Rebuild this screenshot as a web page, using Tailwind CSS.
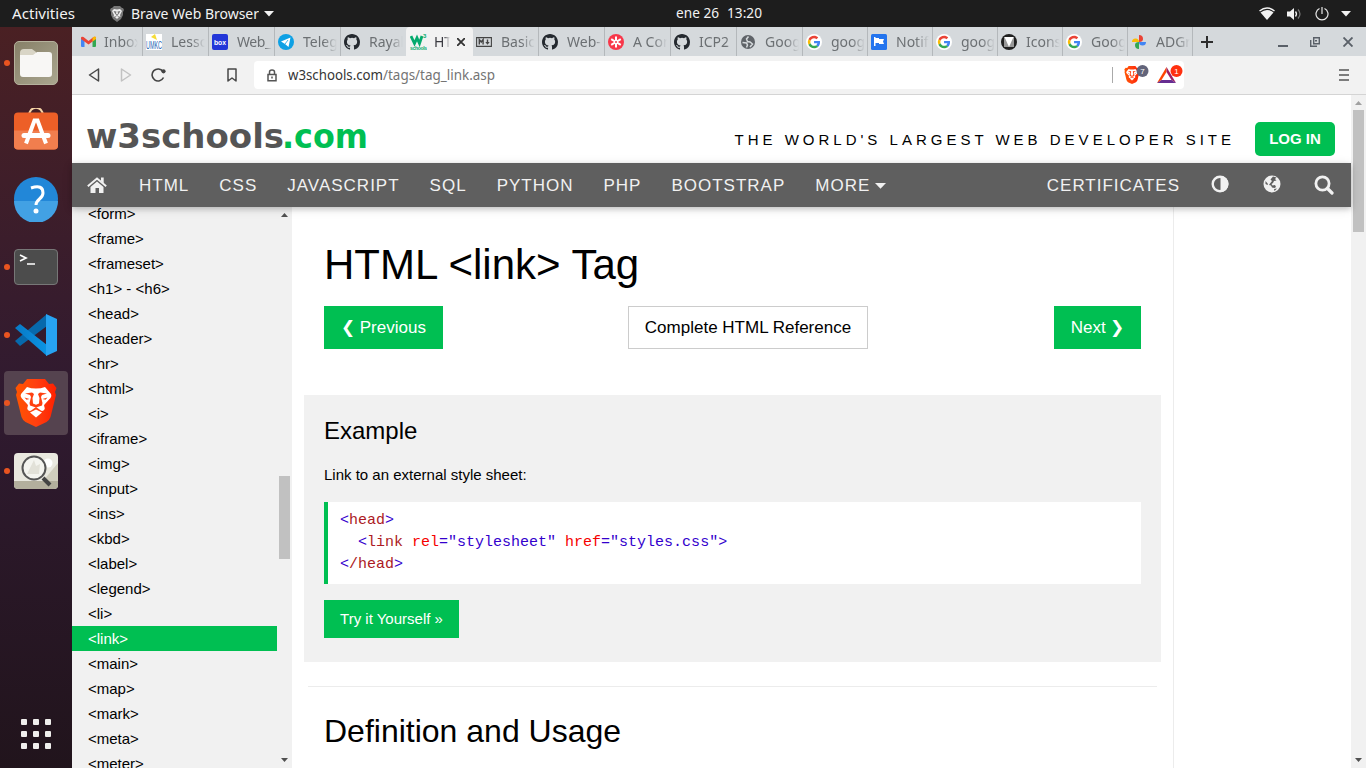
<!DOCTYPE html>
<html lang="en">
<head>
<meta charset="utf-8">
<title>HTML link Tag</title>
<script src="https://cdn.jsdelivr.net/npm/@tailwindcss/browser@4"></script>
</head>
<body class="w-[1366px] h-[768px] overflow-hidden flex flex-col bg-white font-['Liberation_Sans',sans-serif] text-black">
<svg class="absolute w-0 h-0">
  <defs>
    <symbol id="github" viewBox="0 0 16 16"><path fill="#24292f" d="M8 0C3.58 0 0 3.58 0 8c0 3.54 2.29 6.53 5.47 7.59.4.07.55-.17.55-.38v-1.49c-2.01.37-2.53-.49-2.69-.94-.09-.23-.48-.94-.82-1.13-.28-.15-.68-.52-.01-.53.63-.01 1.08.58 1.23.82.72 1.21 1.87.87 2.33.66.07-.52.28-.87.51-1.07-1.78-.2-3.64-.89-3.64-3.95 0-.87.31-1.59.82-2.15-.08-.2-.36-1.02.08-2.12 0 0 .67-.21 2.2.82a7.4 7.4 0 0 1 4 0c1.53-1.04 2.2-.82 2.2-.82.44 1.1.16 1.92.08 2.12.51.56.82 1.27.82 2.15 0 3.07-1.87 3.75-3.65 3.95.29.25.54.73.54 1.48v2.2c0 .21.15.46.55.38A8 8 0 0 0 16 8c0-4.42-3.58-8-8-8z"/></symbol>
    <symbol id="google" viewBox="0 0 16 16"><circle cx="8" cy="8" r="8" fill="#fff"/><g transform="translate(1.800 1.800) scale(.26)"><path fill="#ea4335" d="M24 9.500c3.500 0 6.700 1.200 9.200 3.600l6.900-6.900C35.900 2.400 30.500 0 24 0 14.600 0 6.500 5.400 2.600 13.200l8 6.200C12.400 13.700 17.700 9.500 24 9.500z"/><path fill="#4285f4" d="M47 24.500c0-1.600-.2-3.100-.4-4.500H24v9h12.900c-.6 3-2.200 5.500-4.700 7.200l7.700 6C44.400 38 47 32 47 24.500z"/><path fill="#fbbc05" d="M10.500 28.600a14.500 14.500 0 0 1 0-9.200l-8-6.200a24 24 0 0 0 0 21.600z"/><path fill="#34a853" d="M24 48c6.500 0 11.900-2.100 15.900-5.800l-7.700-6c-2.200 1.500-4.900 2.300-8.200 2.300-6.300 0-11.600-4.200-13.500-9.900l-8 6.200C6.500 42.600 14.600 48 24 48z"/></g></symbol>
    <symbol id="lion" viewBox="0 0 42 48"><path fill="url(#brv)" d="M12 0h18l4 5 4-.5 3.500 4.500-1.500 4 1 3-5.500 22q-1 3-4 5l-10.500 5-10.500-5q-3-2-4-5L1 16l1-3L.5 9 4 4.500l4 .5z"/><path fill="#fff" d="M12 8q4 1.500 9 1.500T30 8l6 7q1 2-.5 4l-6 6.500q-1 1 0 2.500 1 2-1 3.500-1.500 1-3-.2L21 28l-4.500 3.300q-1.500 1.200-3 .2-2-1.500-1-3.500 1-1.500 0-2.500l-6-6.500q-1.500-2-.5-4z"/><path fill="#ff4010" d="M10 14.500l7-1 2 1.500-1.500 4 .5 5.500 3 1.200 3-1.200.5-5.500L23 15l2-1.500 7 1-5 1.500-1 2 1.500 6-.5 2.500-6 2-6-2-.5-2.500L16 18l-1-2zM9.500 18.500l5 1.500-3 .8zM32.500 18.500l-5 1.500 3 .8z"/><path fill="#fff" d="M21 30.500l6 3-6 5-6-5z"/></symbol>
    <linearGradient id="brv"><stop offset="0" stop-color="#ff5500"/><stop offset=".5" stop-color="#ff4010"/><stop offset="1" stop-color="#ff2000"/></linearGradient>
    <linearGradient id="files" x1="0" y1="0" x2="1" y2="1"><stop offset="0" stop-color="#878068"/><stop offset="1" stop-color="#aaa68f"/></linearGradient>
    <linearGradient id="code" x1="0" x2="1"><stop offset="0" stop-color="#0879c5"/><stop offset="1" stop-color="#0b94e4"/></linearGradient>
  </defs>
</svg>

<!-- System bar -->
<header class="h-[27px] shrink-0 bg-[#1d1d1d] text-[#f2f2f2] grid grid-cols-[676px_1fr_auto] items-center font-['Noto_Sans',sans-serif] text-[14px] leading-[27px] whitespace-pre">
  <div class="flex items-center pl-3">
    <svg class="w-[63px] h-[27px] shrink-0" viewBox="0 0 63 27"><text x="0" y="18.500" font-size="14" fill="#f2f2f2" textLength="63" lengthAdjust="spacingAndGlyphs">Activities</text></svg>
    <svg class="w-[14px] h-4 ml-[35px] shrink-0" viewBox="0 0 14 16"><path fill="#777" d="M4 0h6l2 2h1l1 2-1 2v3l-2 4-4 3-4-3-2-4V6L0 4l1-2h1z"/><path fill="#eee" d="M4 3l3 .6L10 3l2 2-2 4 .5 2L7 9.500 3.500 11 4 9 2 5z"/><path d="M3.500 5l3 .5L6 7.500l1 1 1-1-.5-2 3-.5-1.500 2.500L7 10 5 7.500z" fill="#777"/><path d="M5 11l2-1 2 1-2 2z" fill="#eee"/></svg>
    <svg class="w-[128px] h-[27px] ml-[7px] shrink-0" viewBox="0 0 128 27"><text x="0" y="18.500" font-size="14" fill="#f2f2f2" textLength="128" lengthAdjust="spacingAndGlyphs">Brave Web Browser</text></svg>
    <svg class="w-[10px] h-[6px] ml-[5px]" viewBox="0 0 10 6"><path d="M0 0h10L5 5.500z" fill="#f2f2f2"/></svg>
  </div>
  <svg class="w-[87px] h-[27px]" viewBox="0 0 87 27"><text x="0" y="18" font-size="14" fill="#f2f2f2" textLength="43" lengthAdjust="spacingAndGlyphs">ene 26</text><text x="51" y="18" font-size="14" fill="#f2f2f2" textLength="35" lengthAdjust="spacingAndGlyphs">13:20</text></svg>
  <div class="flex items-center pr-[15px]">
    <svg class="w-4 h-[14px]" viewBox="0 0 16 14"><path d="M.5 4Q8-2 15.500 4" fill="none" stroke="#f2f2f2" stroke-width="1.500"/><path d="M1.500 5.500Q8 .5 14.500 5.500L8 13z" fill="#f2f2f2"/></svg>
    <svg class="w-[15px] h-[14px] ml-3" viewBox="0 0 15 14"><path d="M0 4.500h3L7 1v12L3 9.500H0z" fill="#f2f2f2"/><path d="M8.500 4.500q2 2.500 0 5" fill="none" stroke="#f2f2f2" stroke-width="1.300"/><path d="M11 2.500q4 4.500 0 9" fill="none" stroke="#777" stroke-width="1.200"/></svg>
    <svg class="w-[14px] h-[14px] ml-[13px]" viewBox="0 0 14 14"><path d="M4.500 1.500a6 6 0 1 0 5 0M7 0v7" fill="none" stroke="#e8e8e8" stroke-width="1.200"/></svg>
    <svg class="w-[10px] h-[6px] ml-3" viewBox="0 0 10 6"><path d="M0 0h10L5 5.500z" fill="#f2f2f2"/></svg>
  </div>
</header>

<div class="flex flex-1 min-h-0">
  <!-- Dock -->
  <aside class="w-[72px] shrink-0 bg-linear-to-b from-[#4a2023] via-[#301a30] to-[#21141c] flex flex-col pt-[4px] pb-[1px]">
    <div class="h-[64px] mb-1 grid grid-cols-[12px_1fr] items-center"><i class="size-[6px] rounded-full bg-[#e95420] ml-1"></i>
      <svg class="size-[46px] ml-[1px]" viewBox="0 0 46 46"><rect x="1.500" y="1.500" width="43" height="43" rx="4.500" fill="url(#files)" stroke="#b5b19c"/><path d="M7 13q0-4 4-4h8l4 3v7H7z" fill="#d9d5c6"/><path d="M7 15h13l4-3h12q3 0 3 3v19q0 3-3 3H10q-3 0-3-3z" fill="#f8f7f5"/></svg></div>
    <div class="h-[64px] mb-1 pl-[13px] flex items-center">
      <svg class="size-[46px]" viewBox="0 0 46 46"><path d="M16 8c0-11 14-11 14 0" fill="none" stroke="#f6d4a5" stroke-width="2"/><g transform="translate(0 -4.500)"><rect x="1" y="9" width="44" height="37" rx="4" fill="#ed5f27"/><path d="M1 27h44v15q0 4-4 4H5q-4 0-4-4z" fill="#f17e4e"/><path d="M13 40l8.500-23h3L33 40" fill="none" stroke="#fff" stroke-width="4"/><path d="M11 32h24" stroke="#fff" stroke-width="5" stroke-linecap="round"/></g></svg></div>
    <div class="h-[64px] mb-1 pl-[13px] flex items-center">
      <svg class="size-[46px]" viewBox="0 0 46 46"><circle cx="23" cy="23" r="22" fill="#2287d8"/><path d="M1 25a22 22 0 0 0 44 0z" fill="#42a1e4"/><path d="M18 12q12-4 12 5c0 6-7 6-7 12" fill="none" stroke="#fff" stroke-width="3"/><circle cx="23" cy="35" r="2.500" fill="#fff"/></svg></div>
    <div class="h-[64px] mb-1 grid grid-cols-[12px_1fr] items-center"><i class="size-[6px] rounded-full bg-[#e95420] ml-1"></i>
      <svg class="size-[46px] ml-[1px]" viewBox="0 0 46 46"><rect x="1.500" y="5.500" width="43" height="35" rx="3.500" fill="#4c4c4c" stroke="#777"/><path d="M7 11l6 3-6 3M14 20h8" fill="none" stroke="#fff" stroke-width="1.700"/></svg></div>
    <div class="h-[64px] mb-1 grid grid-cols-[12px_1fr] items-center"><i class="size-[6px] rounded-full bg-[#e95420] ml-1"></i>
      <svg class="size-[44px] ml-[2px]" viewBox="0 0 44 44"><path d="M1 28l5 5 27-20V1z" fill="#0769ac"/><path d="M1 15l5-4 27 21v11z" fill="url(#code)"/><path d="M32 1l11 5v32l-11 5z" fill="#27a3f2"/></svg></div>
    <div class="h-[64px] mb-1 mx-1 rounded bg-[#55434f] grid grid-cols-[12px_1fr] items-center"><i class="size-[6px] rounded-full bg-[#e95420]"></i>
      <svg class="w-[42px] h-[48px] -ml-[1px]"><use href="#lion"/></svg></div>
    <div class="h-[64px] grid grid-cols-[12px_1fr] items-center"><i class="size-[6px] rounded-full bg-[#e95420] ml-1"></i>
      <svg class="size-[46px] ml-[1px]" viewBox="0 0 46 46"><rect x="1" y="5" width="44" height="36" rx="4" fill="#e9e8df"/><path d="M1 33h44v4q0 4-4 4H5q-4 0-4-4z" fill="#b3af9d"/><path d="M45 15v18H30z" fill="#d0cdbd"/><circle cx="35" cy="15" r="4.500" fill="#fff"/><circle cx="21" cy="20" r="11.500" fill="#fff" fill-opacity=".5" stroke="#555" stroke-width="2"/><path d="M14 26l7-14 2 6 4-2-1 10z" fill="#e2e1d8"/><path d="M30 30l7 7" stroke="#444" stroke-width="4"/></svg></div>
    <div class="mt-auto mb-[18px] ml-[21px] grid grid-cols-3 gap-[6px] w-[30px]">
      <i class="size-[6px] rounded-[1px] bg-[#f0efed]"></i><i class="size-[6px] rounded-[1px] bg-[#f0efed]"></i><i class="size-[6px] rounded-[1px] bg-[#f0efed]"></i><i class="size-[6px] rounded-[1px] bg-[#f0efed]"></i><i class="size-[6px] rounded-[1px] bg-[#f0efed]"></i><i class="size-[6px] rounded-[1px] bg-[#f0efed]"></i><i class="size-[6px] rounded-[1px] bg-[#f0efed]"></i><i class="size-[6px] rounded-[1px] bg-[#f0efed]"></i><i class="size-[6px] rounded-[1px] bg-[#f0efed]"></i>
    </div>
  </aside>

  <main class="flex-1 min-w-0 flex flex-col">
    <!-- Tabs -->
    <div class="h-[29px] shrink-0 bg-[#d5d9dc] pl-[5px] flex font-['Noto_Sans',sans-serif] text-[14px] text-[#6c7073] whitespace-nowrap">
      <div class="w-[66px] flex items-center pl-1 border-r border-[#b4b8bb]"><svg class="w-[15px] h-4 shrink-0" viewBox="0 0 15 16"><path d="M0 4h3.500v9H1q-1 0-1-1z" fill="#4285f4"/><path d="M11.500 4H15v8q0 1-1 1h-2.500z" fill="#34a853"/><path d="M0 4q0-2 2.500-1l5 4 5-4Q15 2 15 4v1L7.500 10.500 0 5z" fill="#ea4335"/><path d="M11.500 3.800Q15 1 15 4v1l-3.500 2.500z" fill="#fbbc05"/></svg><span class="ml-2 w-[34px] overflow-hidden mask-r-from-60%">Inbox</span></div>
      <div class="w-[66px] flex items-center pl-[3px] border-r border-[#b4b8bb]"><svg class="w-4 h-4 shrink-0" viewBox="0 0 16 16"><path fill="#fff" d="M0 0h16v16H0z"/><path d="M5 3l4-3 2 6z" fill="#f5dc37"/><text x="0" y="15" font-size="11" fill="#1f63b5" font-family="Liberation Sans" textLength="16" lengthAdjust="spacingAndGlyphs">UMKC</text></svg><span class="ml-[9px] w-[34px] overflow-hidden mask-r-from-60%">Lesson</span></div>
      <div class="w-[66px] flex items-center pl-[3px] border-r border-[#b4b8bb]"><svg class="w-4 h-4 shrink-0" viewBox="0 0 16 16"><rect width="16" height="16" rx="2" fill="#2236d8"/><text x="2" y="10.500" font-size="7" fill="#fff" font-weight="bold" font-family="Liberation Sans" textLength="12" lengthAdjust="spacingAndGlyphs">box</text></svg><span class="ml-[9px] w-[35px] overflow-hidden mask-r-from-80% tracking-[-0.4px]">Web_D</span></div>
      <div class="w-[66px] flex items-center pl-[3px] border-r border-[#b4b8bb]"><svg class="w-4 h-4 shrink-0" viewBox="0 0 16 16"><circle cx="8" cy="8" r="8" fill="#0ea0e4"/><path d="M3 7.500l9.500-4L10.500 13 7 10z" fill="#fff"/><path d="M7 10l3-4" stroke="#0ea0e4" stroke-width=".8"/></svg><span class="ml-[9px] w-[34px] overflow-hidden mask-r-from-60%">Telegram</span></div>
      <div class="w-[66px] flex items-center pl-[3px]"><svg class="w-4 h-4 shrink-0"><use href="#github"/></svg><span class="ml-[9px] w-[34px] overflow-hidden mask-r-from-60%">Rayala</span></div>
      <div class="w-[67px] flex items-center pl-[4px] bg-[#f2f2f2] rounded-t text-[#3b3b42] -ml-[1px]"><svg class="w-[17px] h-[18px] shrink-0" viewBox="0 0 17 18"><path d="M1 3l3.500 7.500L7 5l2.500 5.500L12 3" fill="none" stroke="#04aa6d" stroke-width="2.800"/><text x="13" y="5" font-size="6" font-weight="bold" font-family="Liberation Sans" fill="#04aa6d">3</text><text x="0" y="17" font-size="5" font-weight="bold" font-family="Liberation Sans" fill="#04aa6d" textLength="17">schools</text></svg><span class="ml-[7px] w-[16px] overflow-hidden mask-r-from-60%">HTML</span><svg class="size-2 ml-[7px]" viewBox="0 0 8 8"><path d="M0 0l8 8M8 0L0 8" stroke="#333" stroke-width="1.800"/></svg></div>
      <div class="w-[66px] flex items-center pl-[3px] border-r border-[#b4b8bb]"><svg class="w-4 h-4 shrink-0" viewBox="0 0 16 16"><path d="M.6 3.600h14.800v8.800H.6z" fill="none" stroke="#444" stroke-width="1.100"/><path d="M3.300 10.500v-5L5.200 8l1.900-2.500v5M11.500 5.500V9" fill="none" stroke="#444" stroke-width="1.400"/><path d="M9.300 8h4.400l-2.200 2.700z" fill="#444"/></svg><span class="ml-[9px] w-[34px] overflow-hidden mask-r-from-60%">Basic</span></div>
      <div class="w-[66px] flex items-center pl-[3px] border-r border-[#b4b8bb]"><svg class="w-4 h-4 shrink-0"><use href="#github"/></svg><span class="ml-[9px] w-[35px] overflow-hidden mask-r-from-80%">Web-D</span></div>
      <div class="w-[66px] flex items-center pl-[3px] border-r border-[#b4b8bb]"><svg class="w-4 h-4 shrink-0" viewBox="0 0 16 16"><circle cx="8" cy="8" r="8" fill="#f8374a"/><path d="M8 2.500v11M3.200 5.200l9.600 5.600M12.800 5.200l-9.600 5.600" stroke="#fff" stroke-width="2"/><circle cx="8" cy="8" r="1" fill="#f6394d"/></svg><span class="ml-[9px] w-[34px] overflow-hidden mask-r-from-60%">A Com</span></div>
      <div class="w-[66px] flex items-center pl-[3px] border-r border-[#b4b8bb]"><svg class="w-4 h-4 shrink-0"><use href="#github"/></svg><span class="ml-[9px] w-[34px] overflow-hidden mask-r-from-80%">ICP2 -</span></div>
      <div class="w-[66px] flex items-center pl-1 border-r border-[#b4b8bb]"><svg class="w-[14px] h-[14px] shrink-0" viewBox="0 0 14 14"><circle cx="7" cy="7" r="7" fill="#5f6368"/><path d="M7.500 1.500L5.500 4l1 2.500 2.500.5L11.500 9 9 12M1.500 7.500l4 .5 1 2-1 2.500" fill="none" stroke="#d5d9dc" stroke-width="1.500"/></svg><span class="ml-[10px] w-[34px] overflow-hidden mask-r-from-60%">Google</span></div>
      <div class="w-[65px] flex items-center pl-[3px] border-r border-[#b4b8bb]"><svg class="w-4 h-4 shrink-0"><use href="#google"/></svg><span class="ml-[9px] w-[34px] overflow-hidden mask-r-from-60%">google</span></div>
      <div class="w-[65px] flex items-center pl-[3px] border-r border-[#b4b8bb]"><svg class="w-4 h-4 shrink-0" viewBox="0 0 16 16"><rect width="16" height="16" rx="1.500" fill="#2374ee"/><path d="M3 3h1.500v1H8v1h5l-1 2.500 1 2.500H8V9H4.500v3H3z" fill="#fff"/></svg><span class="ml-[9px] w-[33px] overflow-hidden mask-r-from-60%">Notifi</span></div>
      <div class="w-[65px] flex items-center pl-[3px] border-r border-[#b4b8bb]"><svg class="w-4 h-4 shrink-0"><use href="#google"/></svg><span class="ml-[9px] w-[34px] overflow-hidden mask-r-from-60%">google</span></div>
      <div class="w-[65px] flex items-center pl-[3px] border-r border-[#b4b8bb]"><svg class="w-4 h-4 shrink-0" viewBox="0 0 16 16"><circle cx="8" cy="8" r="8" fill="#212121"/><path d="M3 3h10v10H3z" fill="#999"/><path d="M3.500 3h9L8 13z" fill="#fff"/></svg><span class="ml-[9px] w-[34px] overflow-hidden mask-r-from-60%">Icons</span></div>
      <div class="w-[65px] flex items-center pl-[3px] border-r border-[#b4b8bb]"><svg class="w-4 h-4 shrink-0"><use href="#google"/></svg><span class="ml-[9px] w-[34px] overflow-hidden mask-r-from-60%">Google</span></div>
      <div class="w-[65px] flex items-center pl-[3px] border-r border-[#b4b8bb]"><svg class="w-4 h-4 shrink-0" viewBox="0 0 16 16"><path d="M8 1a4 4 0 0 1 4 4q0 3-4 3z" fill="#ea4335"/><path d="M15 8a3.500 3.500 0 0 1-3.500 3.500Q8 11.500 8 8z" fill="#4285f4"/><path d="M8 15a4 4 0 0 1-4-4q0-3 4-3z" fill="#34a853"/><path d="M1 8a3.500 3.500 0 0 1 3.500-3.500Q8 4.500 8 8z" fill="#fbbc05"/></svg><span class="ml-[9px] w-[34px] overflow-hidden mask-r-from-60%">ADGra</span></div>
      <div class="flex items-center pl-2 flex-1"><svg class="size-3" viewBox="0 0 12 12"><path d="M6 0v12M0 6h12" stroke="#2d2d2d" stroke-width="2"/></svg>
        <svg class="w-[10px] h-[10px] ml-auto" viewBox="0 0 10 10"><path d="M0 9h10" stroke="#5a6068" stroke-width="2"/></svg>
        <svg class="size-[10px] ml-[22px]" viewBox="0 0 10 10"><path d="M3.700.7h5.600v6H3.700zM.7 3v6.300H7M5 3.700h2" fill="none" stroke="#5a6068" stroke-width="1.400"/></svg>
        <svg class="size-[10px] ml-[23px] mr-[13px]" viewBox="0 0 10 10"><path d="M.5.5l9 9M9.500.5l-9 9" stroke="#5a6068" stroke-width="1.900"/></svg>
      </div>
    </div>

    <!-- Toolbar -->
    <div class="h-[39px] shrink-0 bg-[#f2f2f2] border-b border-[#d4d4d4] flex items-center pl-4">
      <svg class="w-3 h-[14px]" viewBox="0 0 12 14"><path d="M10.500 1v12L1.500 7z" fill="none" stroke="#484848" stroke-width="1.500" stroke-linejoin="round"/></svg>
      <svg class="w-3 h-[14px] ml-5" viewBox="0 0 12 14"><path d="M1.500 1v12l9-6z" fill="none" stroke="#c2c2c2" stroke-width="1.500" stroke-linejoin="round"/></svg>
      <svg class="w-[15px] h-[14px] ml-[19px]" viewBox="0 0 15 14"><path d="M12.500 9.500A6 6 0 1 1 12 3.500" fill="none" stroke="#444" stroke-width="1.600"/><circle cx="12.500" cy="3.300" r="2.100" fill="#444"/></svg>
      <svg class="w-[10px] h-[14px] ml-[61px]" viewBox="0 0 10 14"><path d="M1 1h8v12l-4-3-4 3z" fill="none" stroke="#484848" stroke-width="1.500" stroke-linejoin="round"/></svg>
      <div class="ml-[17px] w-[930px] h-7 rounded bg-white flex items-center pl-[13px] pr-[1px]">
        <svg class="w-[10px] h-[13px]" viewBox="0 0 10 13"><path d="M1 5.500h8v6.300H1zM2.500 5V3q0-2 2.500-2t2.500 2v2M5 7.500v2" fill="none" stroke="#555" stroke-width="1.500"/></svg>
        <svg class="w-[210px] h-7 ml-[11px] font-['Noto_Sans',sans-serif]" viewBox="0 0 210 28"><text x="0" y="18.500" font-size="14" fill="#353535" textLength="95" lengthAdjust="spacingAndGlyphs">w3schools.com</text><text x="95" y="18.500" font-size="14" fill="#747474" textLength="112" lengthAdjust="spacingAndGlyphs">/tags/tag_link.asp</text></svg>
        <div class="ml-auto h-4 w-px bg-[#aaa]"></div>
        <svg class="w-[25px] h-5 ml-[11px]" viewBox="0 0 25 20"><svg y="1" width="16" height="18"><use href="#lion"/></svg><circle cx="18.500" cy="6" r="6" fill="#62647a"/><text x="18.500" y="8.700" font-size="8" text-anchor="middle" fill="#fff">7</text></svg>
        <svg class="w-[26px] h-5 ml-[8px]" viewBox="0 0 26 20"><path d="M9.500 2L0 18l4.500-3L9.500 7z" fill="#ff4500"/><path d="M9.500 2L19 18l-4.500-3-5-8z" fill="#9e1f63"/><path d="M0 18h19l-4.500-3h-10z" fill="#662d91"/><circle cx="19.500" cy="6" r="6" fill="#ff3010"/><text x="19.500" y="8.700" font-size="8" text-anchor="middle" fill="#fff">1</text></svg>
      </div>
      <svg class="w-[10px] h-3 ml-auto mr-[17px]" viewBox="0 0 10 12"><path d="M0 1h10M0 6h10M0 11h10" stroke="#555" stroke-width="1.700"/></svg>
    </div>

    <!-- Page viewport -->
    <div class="flex-1 min-h-0 flex">
      <div class="w-[1279px] flex flex-col min-h-0">
        <div class="h-[68px] shrink-0 flex items-center pl-[14px] pr-4">
          <svg class="w-[282px] h-[68px]" viewBox="0 0 282 68" aria-label="w3schools.com"><g font-family="DejaVu Sans" font-weight="bold" font-size="34"><text x="0" y="53" textLength="198" lengthAdjust="spacingAndGlyphs" fill="#555">w3schools</text><text x="196" y="53" textLength="86" lengthAdjust="spacingAndGlyphs" fill="#00bf52">.com</text></g></svg>
          <p class="ml-auto mt-[22px] text-[15px] tracking-[4px] whitespace-nowrap">THE WORLD'S LARGEST WEB DEVELOPER SITE</p>
          <a class="ml-5 mt-5 w-20 h-[34px] rounded-[5px] bg-[#00bf52] text-white font-bold text-[15px] flex items-center justify-center">LOG IN</a>
        </div>
        <nav class="relative z-10 h-11 shrink-0 bg-[#5f5f5f] text-[#f1f1f1] flex items-center pt-px text-[17px] tracking-[1px] shadow-[0_2px_5px_rgba(0,0,0,.16),0_2px_10px_rgba(0,0,0,.12)]">
          <span class="w-[52px] pr-[2px] pb-[2px] flex justify-center"><svg class="w-5 h-[18px]" viewBox="0 0 20 18"><path d="M10 5.500l6.500 5.500v6H12v-5H8.500v5h-5v-6z" fill="#f1f1f1"/><path d="M.8 10.300L10 2.500l9.200 7.800" fill="none" stroke="#f1f1f1" stroke-width="1.900"/><path d="M14 1.500h2.700v6L14 5z" fill="#f1f1f1"/></svg></span>
          <span class="px-[15px]">HTML</span><span class="px-[15px]">CSS</span><span class="px-[15px]">JAVASCRIPT</span><span class="px-[15px]">SQL</span><span class="px-[15px]">PYTHON</span><span class="px-[15px]">PHP</span><span class="px-[15px]">BOOTSTRAP</span>
          <span class="px-[15px] flex items-center gap-[5px]">MORE<svg class="w-[11px] h-[6px]" viewBox="0 0 11 6"><path d="M0 0h11L5.500 5.800z" fill="#f1f1f1"/></svg></span>
          <span class="ml-auto px-[15px]">CERTIFICATES</span>
          <span class="w-[52px] pr-[2px] pb-[3px] h-full flex justify-center items-center"><svg class="size-[18px]" viewBox="0 0 18 18"><circle cx="9" cy="9" r="7.300" fill="none" stroke="#f1f1f1" stroke-width="2.400"/><path d="M9.500 1v16a8 8 0 0 0 0-16z" fill="#f1f1f1"/></svg></span>
          <span class="w-[52px] pr-[2px] pb-[3px] h-full flex justify-center items-center"><svg class="size-[18px]" viewBox="0 0 18 18"><circle cx="9" cy="9" r="8.500" fill="#f1f1f1"/><path d="M10 1.500l3.500 1-1.500 1.500 1.500 1.500-2.500.5-1 2-1.500 1 1 1.500 2.500-.5 1 2-1.500 1-2.500-.5L8 10.500l-2-.5 1-1.500L9 6 7.500 4.500zM2.500 6L5 9l-.5 1-2-1zM11 14l3-.5-2.500 2.500z" fill="#5f5f5f"/></svg></span>
          <span class="w-[52px] pr-[2px] pb-[2px] h-full flex justify-center items-center"><svg class="size-5" viewBox="0 0 20 20"><circle cx="8.500" cy="8.500" r="6.600" fill="none" stroke="#f1f1f1" stroke-width="2.800"/><path d="M13.500 13.500l4.500 4.500" stroke="#f1f1f1" stroke-width="3.200" stroke-linecap="round"/></svg></span>
        </nav>
        <div class="flex-1 min-h-0 flex">
          <div class="w-[220px] shrink-0 bg-[#f1f1f1] flex overflow-hidden text-[15px] leading-[25px]">
            <ul class="w-[205px] -mt-[6px] *:h-[25px] *:pl-4">
              <li>&lt;form&gt;</li><li>&lt;frame&gt;</li><li>&lt;frameset&gt;</li><li>&lt;h1&gt; - &lt;h6&gt;</li><li>&lt;head&gt;</li><li>&lt;header&gt;</li><li>&lt;hr&gt;</li><li>&lt;html&gt;</li><li>&lt;i&gt;</li><li>&lt;iframe&gt;</li><li>&lt;img&gt;</li><li>&lt;input&gt;</li><li>&lt;ins&gt;</li><li>&lt;kbd&gt;</li><li>&lt;label&gt;</li><li>&lt;legend&gt;</li><li>&lt;li&gt;</li><li class="bg-[#00bf52] text-white">&lt;link&gt;</li><li>&lt;main&gt;</li><li>&lt;map&gt;</li><li>&lt;mark&gt;</li><li>&lt;meta&gt;</li><li>&lt;meter&gt;</li>
            </ul>
            <div class="w-[15px] flex flex-col items-center pt-[6px] pb-[6px]">
              <svg class="w-[7px] h-1" viewBox="0 0 7 4"><path d="M0 4h7L3.500 0z" fill="#505050"/></svg>
              <div class="mt-[259px] w-[11px] h-[83px] bg-[#c1c1c1]"></div>
              <svg class="w-[7px] h-1 mt-auto" viewBox="0 0 7 4"><path d="M0 0h7L3.500 4z" fill="#505050"/></svg>
            </div>
          </div>
          <article class="w-[882px] shrink-0 border-r border-[#ececec] pt-[33px] px-3 overflow-hidden">
            <h1 class="text-[42px] leading-[50px] pl-5">HTML &lt;link&gt; Tag</h1>
            <div class="flex justify-between mt-4 pl-5 pr-5 text-[17px] *:h-[43px] *:flex *:items-center *:justify-center">
              <a class="w-[119px] bg-[#00bf52] text-white">❮ Previous</a>
              <a class="w-[240px] border border-[#ccc] mr-[2px] pl-px">Complete HTML Reference</a>
              <a class="w-[87px] bg-[#00bf52] text-white">Next ❯</a>
            </div>
            <section class="mt-[46px] h-[267px] bg-[#f1f1f1] px-5 pt-[18px]">
              <h3 class="text-[24px] leading-9">Example</h3>
              <p class="text-[15px] leading-[22px] mt-[15px]">Link to an external style sheet:</p>
              <pre class="mt-4 h-[82px] bg-white border-l-4 border-[#00bf52] pl-3 pt-2 font-['Liberation_Mono',monospace] text-[15px] leading-[22px] text-[#ac1a24]"><span class="text-[#3300cd]">&lt;</span>head<span class="text-[#3300cd]">&gt;</span>
  <span class="text-[#3300cd]">&lt;</span>link<span class="text-[#f60000]"> rel</span><span class="text-[#3300cd]">="stylesheet"</span><span class="text-[#f60000]"> href</span><span class="text-[#3300cd]">="styles.css"&gt;</span>
<span class="text-[#3300cd]">&lt;</span>/head<span class="text-[#3300cd]">&gt;</span></pre>
              <a class="mt-4 w-[135px] h-[38px] bg-[#00bf52] text-white text-[15px] flex items-center justify-center">Try it Yourself »</a>
            </section>
            <hr class="mt-6 mx-1 border-[#ececec]">
            <h2 class="text-[32px] leading-[48px] mt-5 pl-5">Definition and Usage</h2>
          </article>
        </div>
      </div>
      <div class="w-[15px] bg-[#f1f1f1] flex flex-col items-center pt-[6px] pb-[6px]">
        <svg class="w-[7px] h-1" viewBox="0 0 7 4"><path d="M0 4h7L3.500 0z" fill="#a0a0a0"/></svg>
        <div class="mt-[5px] w-[11px] h-[122px] bg-[#c1c1c1]"></div>
        <svg class="w-[7px] h-1 mt-auto" viewBox="0 0 7 4"><path d="M0 0h7L3.500 4z" fill="#505050"/></svg>
      </div>
    </div>
  </main>
</div>
</body>
</html>
